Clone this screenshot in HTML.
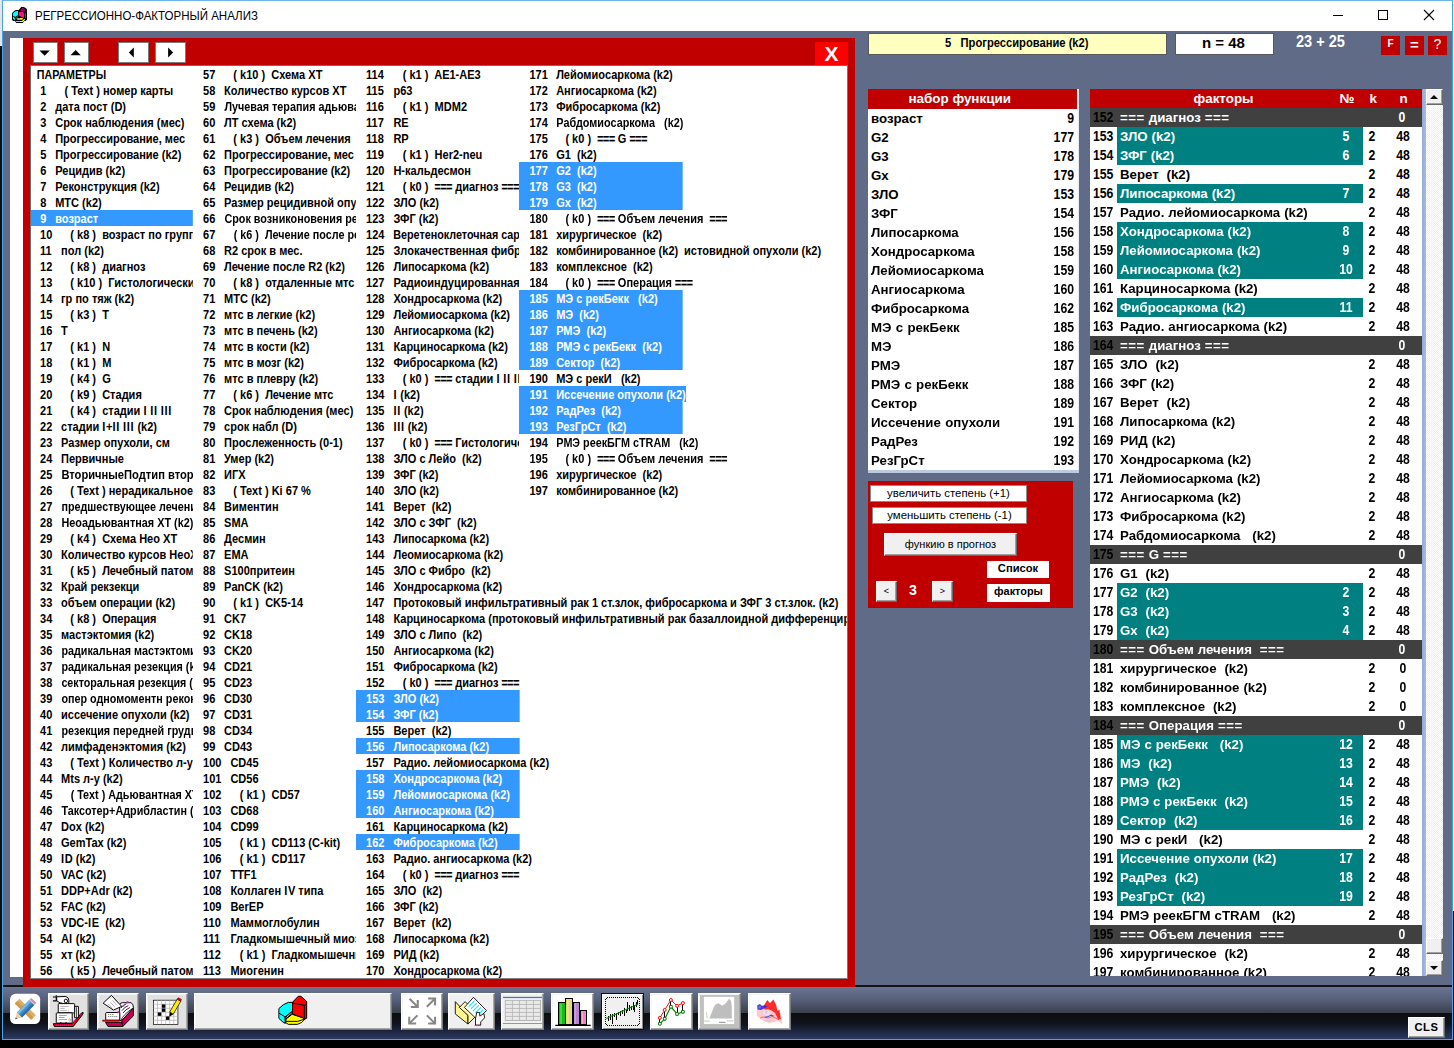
<!DOCTYPE html><html><head><meta charset='utf-8'><title>РЕГРЕССИОННО-ФАКТОРНЫЙ АНАЛИЗ</title><style>
*{box-sizing:border-box;margin:0;padding:0}
html,body{width:1454px;height:1048px;overflow:hidden;background:#000}
body{font-family:"Liberation Sans",sans-serif;position:relative;color:#000}
.a{position:absolute}
#win{position:absolute;left:0;top:0;width:1454px;height:1048px;overflow:hidden;background:#606B88}
.lr{position:absolute;height:16px;line-height:16px;font-weight:bold;font-size:13px;white-space:pre;transform-origin:0 0;transform:scaleX(0.848);overflow:hidden;background:#fff}
.lr span{position:absolute;top:1px}
.lr.s{background:#3399FF;color:#fff}
.nb{font-weight:bold;white-space:pre;display:inline-block;transform-origin:0 50%}
.btn3d{background:#F0F0F0;border:1px solid;border-color:#fff #696969 #696969 #fff;box-shadow:inset -1px -1px 0 #A0A0A0}
.tb{position:absolute;top:993px;height:37px;background:#E1E1E1;border:1px solid;border-color:#fff #7a7a7a #7a7a7a #fff;box-shadow:inset -1px -1px 0 #a8a8a8, inset 1px 1px 0 #f4f4f4}
.fr{position:absolute;left:0;width:332px;height:19px;line-height:19px;white-space:pre}
.fr span{position:absolute;top:0}
.num{font-weight:bold;font-size:14.4px;transform:scaleX(0.85);white-space:pre}
.nm{font-weight:bold;font-size:13.25px;transform:translateY(-0.45px);word-spacing:0.25px}
.eq{letter-spacing:0.55px}
.eq2{letter-spacing:-0.35px;font-style:normal;-webkit-text-stroke:0.25px currentColor;font-size:12.4px}
.ci{letter-spacing:0.8px;font-style:normal}
</style></head><body><div id='win'>
<div class='a' style='left:0;top:0;width:3px;height:46px;background:#E4E4E4'></div>
<div class='a' style='left:0;top:46px;width:3px;height:1002px;background:#0c0e14'></div>
<div class='a' style='left:1453px;top:0;width:1px;height:911px;background:#E6EEF8'></div><div class='a' style='left:1453px;top:911px;width:1px;height:137px;background:#000'></div>
<div class='a' style='left:2px;top:0;width:1451px;height:1040px;border:1px solid #4AA3E3;border-top-color:#6BB5EA'></div>
<div class='a' style='left:3px;top:1px;width:1449px;height:30px;background:#fff'></div>
<div class='a' style='left:35px;top:1px;height:30px;line-height:31px;font-size:12.3px;white-space:pre;transform-origin:0 50%;transform:scaleX(0.936)'>РЕГРЕССИОННО-ФАКТОРНЫЙ АНАЛИЗ</div>
<svg class='a' style='left:8px;top:4px' width='24' height='24' viewBox='0 0 1048 1048'>
<polygon points='175,400 265,310 350,265 470,265 575,130 690,130 790,185 830,235 830,690 770,740 700,740 650,825 355,825 310,740 225,740 175,690' fill='#000'/>
<polygon points='215,420 270,350 360,310 440,310 440,480 330,560 215,540' fill='#00FFFF'/>
<polygon points='215,570 250,570 310,640 310,700 260,690 215,620' fill='#00FFFF'/>
<polygon points='530,270 620,180 690,180 745,240 745,340 700,330 530,300' fill='#90005A'/>
<polygon points='480,350 640,350 700,420 700,600 660,600 480,500' fill='#FF1088'/>
<rect x='740' y='390' width='50' height='220' fill='#F00030'/>
<path d='M425 545 Q340 610 420 665' stroke='#9a9a9a' stroke-width='40' fill='none'/>
<rect x='410' y='625' width='110' height='65' fill='#E0E0F0'/>
<rect x='350' y='745' width='170' height='40' fill='#D8D8D8'/>
<polygon points='520,610 660,610 620,690 520,690' fill='#FFFF00'/>
<polygon points='520,745 610,745 700,650 750,660 740,690 650,785 520,785' fill='#FFFF00'/>
</svg>
<div class='a' style='left:1333px;top:15px;width:10px;height:1px;background:#000'></div>
<div class='a' style='left:1378px;top:10px;width:10px;height:10px;border:1px solid #000'></div>
<svg class='a' style='left:1423px;top:9px' width='12' height='12' viewBox='0 0 12 12'><path d='M1 1 L11 11 M11 1 L1 11' stroke='#000' stroke-width='1.1' fill='none'/></svg>
<div class='a' style='left:10px;top:38px;width:13px;height:939px;background:#fff'></div>
<div class='a' style='left:23px;top:38px;width:832px;height:949px;background:#C00000'></div>
<div class='a' style='left:3px;top:985px;width:1449px;height:2px;background:#151515'></div>
<div class='a' style='left:23px;top:985px;width:832px;height:2px;background:#C00000'></div>
<div class='a' style='left:33px;top:42px;width:25px;height:21px;background:#fff;border:1px solid #7a7a7a'></div>
<svg class='a' style='left:0;top:0' width='200' height='70'><polygon points='39.5,50.5 49.8,50.5 44.65,55.7' fill='#000'/></svg>
<div class='a' style='left:64px;top:42px;width:25px;height:21px;background:#fff;border:1px solid #7a7a7a'></div>
<svg class='a' style='left:0;top:0' width='200' height='70'><polygon points='70.5,55.3 80.8,55.3 75.65,50.1' fill='#000'/></svg>
<div class='a' style='left:118px;top:42px;width:31px;height:21px;background:#fff;border:1px solid #7a7a7a'></div>
<svg class='a' style='left:0;top:0' width='200' height='70'><polygon points='133.8,47.5 133.8,57.5 128.9,52.5' fill='#000'/></svg>
<div class='a' style='left:155px;top:42px;width:31px;height:21px;background:#fff;border:1px solid #7a7a7a'></div>
<svg class='a' style='left:0;top:0' width='200' height='70'><polygon points='168.1,47.5 168.1,57.5 173.1,52.5' fill='#000'/></svg>
<div class='a' style='left:815px;top:42px;width:33px;height:23px;background:#FF0000;color:#fff;font-weight:bold;font-size:21px;line-height:23px;text-align:center'>X</div>
<div class='a' style='left:30px;top:65px;width:818px;height:914px;background:#fff;border:1px solid #6e6e6e;border-right-color:#8a7070;border-bottom-color:#8a8080;overflow:hidden'>
<div class='lr' style='left:-1px;top:0px;width:192.2px'><span style='left:8.3px;transform:scaleX(0.967);transform-origin:0 0'>ПАРАМЕТРЫ</span></div>
<div class='lr' style='left:-1px;top:16px;width:192.2px'><span style='left:12.0px'>1</span><span style='left:40.7px'>( Text ) номер карты</span></div>
<div class='lr' style='left:-1px;top:32px;width:192.2px'><span style='left:12.0px'>2</span><span style='left:29.7px'>дата пост (D)</span></div>
<div class='lr' style='left:-1px;top:48px;width:192.2px'><span style='left:12.0px'>3</span><span style='left:29.7px'>Срок наблюдения (мес)</span></div>
<div class='lr' style='left:-1px;top:64px;width:192.2px'><span style='left:12.0px'>4</span><span style='left:29.7px'>Прогрессирование, мес</span></div>
<div class='lr' style='left:-1px;top:80px;width:192.2px'><span style='left:12.0px'>5</span><span style='left:29.7px'>Прогрессирование (k2)</span></div>
<div class='lr' style='left:-1px;top:96px;width:192.2px'><span style='left:12.0px'>6</span><span style='left:29.7px'>Рецидив (k2)</span></div>
<div class='lr' style='left:-1px;top:112px;width:192.2px'><span style='left:12.0px'>7</span><span style='left:29.7px'>Реконструкция (k2)</span></div>
<div class='lr' style='left:-1px;top:128px;width:192.2px'><span style='left:12.0px'>8</span><span style='left:29.7px'>МТС (k2)</span></div>
<div class='lr s' style='left:-1px;top:144px;width:192.2px'><span style='left:12.0px'>9</span><span style='left:29.7px'>возраст</span></div>
<div class='lr' style='left:-1px;top:160px;width:192.2px'><span style='left:11.8px'>10</span><span style='left:47.5px'>( k8 )  возраст по группам</span></div>
<div class='lr' style='left:-1px;top:176px;width:192.2px'><span style='left:11.8px'>11</span><span style='left:36.6px'>пол (k2)</span></div>
<div class='lr' style='left:-1px;top:192px;width:192.2px'><span style='left:11.8px'>12</span><span style='left:47.5px'>( k8 )  диагноз</span></div>
<div class='lr' style='left:-1px;top:208px;width:192.2px'><span style='left:11.8px'>13</span><span style='left:47.5px'>( k10 )  Гистологический тип</span></div>
<div class='lr' style='left:-1px;top:224px;width:192.2px'><span style='left:11.8px'>14</span><span style='left:36.6px'>гр по тяж (k2)</span></div>
<div class='lr' style='left:-1px;top:240px;width:192.2px'><span style='left:11.8px'>15</span><span style='left:47.5px'>( k3 )  T</span></div>
<div class='lr' style='left:-1px;top:256px;width:192.2px'><span style='left:11.8px'>16</span><span style='left:36.6px'>T</span></div>
<div class='lr' style='left:-1px;top:272px;width:192.2px'><span style='left:11.8px'>17</span><span style='left:47.5px'>( k1 )  N</span></div>
<div class='lr' style='left:-1px;top:288px;width:192.2px'><span style='left:11.8px'>18</span><span style='left:47.5px'>( k1 )  M</span></div>
<div class='lr' style='left:-1px;top:304px;width:192.2px'><span style='left:11.8px'>19</span><span style='left:47.5px'>( k4 )  G</span></div>
<div class='lr' style='left:-1px;top:320px;width:192.2px'><span style='left:11.8px'>20</span><span style='left:47.5px'>( k9 )  Стадия</span></div>
<div class='lr' style='left:-1px;top:336px;width:192.2px'><span style='left:11.8px'>21</span><span style='left:47.5px'>( k4 )  стадии <i class='ci'>I</i> <i class='ci'>I</i><i class='ci'>I</i> <i class='ci'>I</i><i class='ci'>I</i><i class='ci'>I</i></span></div>
<div class='lr' style='left:-1px;top:352px;width:192.2px'><span style='left:11.8px'>22</span><span style='left:36.6px'>стадии <i class='ci'>I</i>+<i class='ci'>I</i><i class='ci'>I</i> <i class='ci'>I</i><i class='ci'>I</i><i class='ci'>I</i> (k2)</span></div>
<div class='lr' style='left:-1px;top:368px;width:192.2px'><span style='left:11.8px'>23</span><span style='left:36.6px'>Размер опухоли, см</span></div>
<div class='lr' style='left:-1px;top:384px;width:192.2px'><span style='left:11.8px'>24</span><span style='left:36.6px'>Первичные</span></div>
<div class='lr' style='left:-1px;top:400px;width:192.2px'><span style='left:11.8px'>25</span><span style='left:36.6px;transform:scaleX(1.012);transform-origin:0 0'>ВторичныеПодтип вторичных</span></div>
<div class='lr' style='left:-1px;top:416px;width:192.2px'><span style='left:11.8px'>26</span><span style='left:47.5px'>( Text ) нерадикальное лечение</span></div>
<div class='lr' style='left:-1px;top:432px;width:192.2px'><span style='left:11.8px'>27</span><span style='left:36.6px;transform:scaleX(0.978);transform-origin:0 0'>предшествующее лечение (k2)</span></div>
<div class='lr' style='left:-1px;top:448px;width:192.2px'><span style='left:11.8px'>28</span><span style='left:36.6px;transform:scaleX(0.985);transform-origin:0 0'>Неоадьювантная ХТ (k2)</span></div>
<div class='lr' style='left:-1px;top:464px;width:192.2px'><span style='left:11.8px'>29</span><span style='left:47.5px'>( k4 )  Схема Нео ХТ</span></div>
<div class='lr' style='left:-1px;top:480px;width:192.2px'><span style='left:11.8px'>30</span><span style='left:36.6px'>Количество курсов НеоХТ</span></div>
<div class='lr' style='left:-1px;top:496px;width:192.2px'><span style='left:11.8px'>31</span><span style='left:47.5px'>( k5 )  Лечебный патоморфоз</span></div>
<div class='lr' style='left:-1px;top:512px;width:192.2px'><span style='left:11.8px'>32</span><span style='left:36.6px'>Край рекзекци</span></div>
<div class='lr' style='left:-1px;top:528px;width:192.2px'><span style='left:11.8px'>33</span><span style='left:36.6px'>объем операции (k2)</span></div>
<div class='lr' style='left:-1px;top:544px;width:192.2px'><span style='left:11.8px'>34</span><span style='left:47.5px'>( k8 )  Операция</span></div>
<div class='lr' style='left:-1px;top:560px;width:192.2px'><span style='left:11.8px'>35</span><span style='left:36.6px'>мастэктомия (k2)</span></div>
<div class='lr' style='left:-1px;top:576px;width:192.2px'><span style='left:11.8px'>36</span><span style='left:36.6px;transform:scaleX(0.978);transform-origin:0 0'>радикальная мастэктомия (k2)</span></div>
<div class='lr' style='left:-1px;top:592px;width:192.2px'><span style='left:11.8px'>37</span><span style='left:36.6px;transform:scaleX(0.978);transform-origin:0 0'>радикальная резекция (k2)</span></div>
<div class='lr' style='left:-1px;top:608px;width:192.2px'><span style='left:11.8px'>38</span><span style='left:36.6px;transform:scaleX(0.972);transform-origin:0 0'>секторальная резекция (k2)</span></div>
<div class='lr' style='left:-1px;top:624px;width:192.2px'><span style='left:11.8px'>39</span><span style='left:36.6px;transform:scaleX(0.978);transform-origin:0 0'>опер одномоментн реконстр (k2)</span></div>
<div class='lr' style='left:-1px;top:640px;width:192.2px'><span style='left:11.8px'>40</span><span style='left:36.6px'>иссечение опухоли (k2)</span></div>
<div class='lr' style='left:-1px;top:656px;width:192.2px'><span style='left:11.8px'>41</span><span style='left:36.6px;transform:scaleX(0.978);transform-origin:0 0'>резекция передней грудной стенки (k2)</span></div>
<div class='lr' style='left:-1px;top:672px;width:192.2px'><span style='left:11.8px'>42</span><span style='left:36.6px'>лимфаденэктомия (k2)</span></div>
<div class='lr' style='left:-1px;top:688px;width:192.2px'><span style='left:11.8px'>43</span><span style='left:47.5px'>( Text ) Количество л-у</span></div>
<div class='lr' style='left:-1px;top:704px;width:192.2px'><span style='left:11.8px'>44</span><span style='left:36.6px'>Mts л-у (k2)</span></div>
<div class='lr' style='left:-1px;top:720px;width:192.2px'><span style='left:11.8px'>45</span><span style='left:47.5px;transform:scaleX(0.978);transform-origin:0 0'>( Text ) Адьювантная ХТ</span></div>
<div class='lr' style='left:-1px;top:736px;width:192.2px'><span style='left:11.8px'>46</span><span style='left:36.6px;transform:scaleX(0.978);transform-origin:0 0'>Таксотер+Адрибластин (k2)</span></div>
<div class='lr' style='left:-1px;top:752px;width:192.2px'><span style='left:11.8px'>47</span><span style='left:36.6px'>Dox (k2)</span></div>
<div class='lr' style='left:-1px;top:768px;width:192.2px'><span style='left:11.8px'>48</span><span style='left:36.6px'>GemTax (k2)</span></div>
<div class='lr' style='left:-1px;top:784px;width:192.2px'><span style='left:11.8px'>49</span><span style='left:36.6px'><i class='ci'>I</i>D (k2)</span></div>
<div class='lr' style='left:-1px;top:800px;width:192.2px'><span style='left:11.8px'>50</span><span style='left:36.6px'>VAC (k2)</span></div>
<div class='lr' style='left:-1px;top:816px;width:192.2px'><span style='left:11.8px'>51</span><span style='left:36.6px'>DDP+Adr (k2)</span></div>
<div class='lr' style='left:-1px;top:832px;width:192.2px'><span style='left:11.8px'>52</span><span style='left:36.6px'>FAC (k2)</span></div>
<div class='lr' style='left:-1px;top:848px;width:192.2px'><span style='left:11.8px'>53</span><span style='left:36.6px'>VDC-<i class='ci'>I</i>E  (k2)</span></div>
<div class='lr' style='left:-1px;top:864px;width:192.2px'><span style='left:11.8px'>54</span><span style='left:36.6px'>A<i class='ci'>I</i> (k2)</span></div>
<div class='lr' style='left:-1px;top:880px;width:192.2px'><span style='left:11.8px'>55</span><span style='left:36.6px'>хт (k2)</span></div>
<div class='lr' style='left:-1px;top:896px;width:192.2px'><span style='left:11.8px'>56</span><span style='left:47.5px'>( k5 )  Лечебный патоморфоз</span></div>
<div class='lr' style='left:162px;top:0px;width:192.2px'><span style='left:11.8px'>57</span><span style='left:47.5px'>( k10 )  Схема ХТ</span></div>
<div class='lr' style='left:162px;top:16px;width:192.2px'><span style='left:11.8px'>58</span><span style='left:36.6px'>Количество курсов ХТ</span></div>
<div class='lr' style='left:162px;top:32px;width:192.2px'><span style='left:11.8px'>59</span><span style='left:36.6px;transform:scaleX(0.98);transform-origin:0 0'>Лучевая терапия адьювантная (k2)</span></div>
<div class='lr' style='left:162px;top:48px;width:192.2px'><span style='left:11.8px'>60</span><span style='left:36.6px'>ЛТ схема (k2)</span></div>
<div class='lr' style='left:162px;top:64px;width:192.2px'><span style='left:11.8px'>61</span><span style='left:47.5px'>( k3 )  Объем лечения</span></div>
<div class='lr' style='left:162px;top:80px;width:192.2px'><span style='left:11.8px'>62</span><span style='left:36.6px'>Прогрессирование, мес</span></div>
<div class='lr' style='left:162px;top:96px;width:192.2px'><span style='left:11.8px'>63</span><span style='left:36.6px'>Прогрессирование (k2)</span></div>
<div class='lr' style='left:162px;top:112px;width:192.2px'><span style='left:11.8px'>64</span><span style='left:36.6px'>Рецидив (k2)</span></div>
<div class='lr' style='left:162px;top:128px;width:192.2px'><span style='left:11.8px'>65</span><span style='left:36.6px'>Размер рецидивной опухоли</span></div>
<div class='lr' style='left:162px;top:144px;width:192.2px'><span style='left:11.8px'>66</span><span style='left:36.6px;transform:scaleX(0.98);transform-origin:0 0'>Срок возниконовения рецидива</span></div>
<div class='lr' style='left:162px;top:160px;width:192.2px'><span style='left:11.8px'>67</span><span style='left:47.5px;transform:scaleX(0.98);transform-origin:0 0'>( k6 )  Лечение после рецидива</span></div>
<div class='lr' style='left:162px;top:176px;width:192.2px'><span style='left:11.8px'>68</span><span style='left:36.6px'>R2 срок в мес.</span></div>
<div class='lr' style='left:162px;top:192px;width:192.2px'><span style='left:11.8px'>69</span><span style='left:36.6px'>Лечение после R2 (k2)</span></div>
<div class='lr' style='left:162px;top:208px;width:192.2px'><span style='left:11.8px'>70</span><span style='left:47.5px'>( k8 )  отдаленные мтс</span></div>
<div class='lr' style='left:162px;top:224px;width:192.2px'><span style='left:11.8px'>71</span><span style='left:36.6px'>МТС (k2)</span></div>
<div class='lr' style='left:162px;top:240px;width:192.2px'><span style='left:11.8px'>72</span><span style='left:36.6px'>мтс в легкие (k2)</span></div>
<div class='lr' style='left:162px;top:256px;width:192.2px'><span style='left:11.8px'>73</span><span style='left:36.6px'>мтс в печень (k2)</span></div>
<div class='lr' style='left:162px;top:272px;width:192.2px'><span style='left:11.8px'>74</span><span style='left:36.6px'>мтс в кости (k2)</span></div>
<div class='lr' style='left:162px;top:288px;width:192.2px'><span style='left:11.8px'>75</span><span style='left:36.6px'>мтс в мозг (k2)</span></div>
<div class='lr' style='left:162px;top:304px;width:192.2px'><span style='left:11.8px'>76</span><span style='left:36.6px'>мтс в плевру (k2)</span></div>
<div class='lr' style='left:162px;top:320px;width:192.2px'><span style='left:11.8px'>77</span><span style='left:47.5px'>( k6 )  Лечение мтс</span></div>
<div class='lr' style='left:162px;top:336px;width:192.2px'><span style='left:11.8px'>78</span><span style='left:36.6px'>Срок наблюдения (мес)</span></div>
<div class='lr' style='left:162px;top:352px;width:192.2px'><span style='left:11.8px'>79</span><span style='left:36.6px'>срок набл (D)</span></div>
<div class='lr' style='left:162px;top:368px;width:192.2px'><span style='left:11.8px'>80</span><span style='left:36.6px'>Прослеженность (0-1)</span></div>
<div class='lr' style='left:162px;top:384px;width:192.2px'><span style='left:11.8px'>81</span><span style='left:36.6px'>Умер (k2)</span></div>
<div class='lr' style='left:162px;top:400px;width:192.2px'><span style='left:11.8px'>82</span><span style='left:36.6px'>ИГХ</span></div>
<div class='lr' style='left:162px;top:416px;width:192.2px'><span style='left:11.8px'>83</span><span style='left:47.5px'>( Text ) Ki 67 %</span></div>
<div class='lr' style='left:162px;top:432px;width:192.2px'><span style='left:11.8px'>84</span><span style='left:36.6px'>Виментин</span></div>
<div class='lr' style='left:162px;top:448px;width:192.2px'><span style='left:11.8px'>85</span><span style='left:36.6px'>SMA</span></div>
<div class='lr' style='left:162px;top:464px;width:192.2px'><span style='left:11.8px'>86</span><span style='left:36.6px'>Десмин</span></div>
<div class='lr' style='left:162px;top:480px;width:192.2px'><span style='left:11.8px'>87</span><span style='left:36.6px'>EMA</span></div>
<div class='lr' style='left:162px;top:496px;width:192.2px'><span style='left:11.8px'>88</span><span style='left:36.6px'>S100притеин</span></div>
<div class='lr' style='left:162px;top:512px;width:192.2px'><span style='left:11.8px'>89</span><span style='left:36.6px'>PanCK (k2)</span></div>
<div class='lr' style='left:162px;top:528px;width:192.2px'><span style='left:11.8px'>90</span><span style='left:47.5px'>( k1 )  CK5-14</span></div>
<div class='lr' style='left:162px;top:544px;width:192.2px'><span style='left:11.8px'>91</span><span style='left:36.6px'>CK7</span></div>
<div class='lr' style='left:162px;top:560px;width:192.2px'><span style='left:11.8px'>92</span><span style='left:36.6px'>CK18</span></div>
<div class='lr' style='left:162px;top:576px;width:192.2px'><span style='left:11.8px'>93</span><span style='left:36.6px'>CK20</span></div>
<div class='lr' style='left:162px;top:592px;width:192.2px'><span style='left:11.8px'>94</span><span style='left:36.6px'>CD21</span></div>
<div class='lr' style='left:162px;top:608px;width:192.2px'><span style='left:11.8px'>95</span><span style='left:36.6px'>CD23</span></div>
<div class='lr' style='left:162px;top:624px;width:192.2px'><span style='left:11.8px'>96</span><span style='left:36.6px'>CD30</span></div>
<div class='lr' style='left:162px;top:640px;width:192.2px'><span style='left:11.8px'>97</span><span style='left:36.6px'>CD31</span></div>
<div class='lr' style='left:162px;top:656px;width:192.2px'><span style='left:11.8px'>98</span><span style='left:36.6px'>CD34</span></div>
<div class='lr' style='left:162px;top:672px;width:192.2px'><span style='left:11.8px'>99</span><span style='left:36.6px'>CD43</span></div>
<div class='lr' style='left:162px;top:688px;width:192.2px'><span style='left:11.8px'>100</span><span style='left:44.1px'>CD45</span></div>
<div class='lr' style='left:162px;top:704px;width:192.2px'><span style='left:11.8px'>101</span><span style='left:44.1px'>CD56</span></div>
<div class='lr' style='left:162px;top:720px;width:192.2px'><span style='left:11.8px'>102</span><span style='left:55.1px'>( k1 )  CD57</span></div>
<div class='lr' style='left:162px;top:736px;width:192.2px'><span style='left:11.8px'>103</span><span style='left:44.1px'>CD68</span></div>
<div class='lr' style='left:162px;top:752px;width:192.2px'><span style='left:11.8px'>104</span><span style='left:44.1px'>CD99</span></div>
<div class='lr' style='left:162px;top:768px;width:192.2px'><span style='left:11.8px'>105</span><span style='left:55.1px'>( k1 )  CD113 (C-kit)</span></div>
<div class='lr' style='left:162px;top:784px;width:192.2px'><span style='left:11.8px'>106</span><span style='left:55.1px'>( k1 )  CD117</span></div>
<div class='lr' style='left:162px;top:800px;width:192.2px'><span style='left:11.8px'>107</span><span style='left:44.1px'>TTF1</span></div>
<div class='lr' style='left:162px;top:816px;width:192.2px'><span style='left:11.8px'>108</span><span style='left:44.1px'>Коллаген <i class='ci'>I</i>V типа</span></div>
<div class='lr' style='left:162px;top:832px;width:192.2px'><span style='left:11.8px'>109</span><span style='left:44.1px'>BerEP</span></div>
<div class='lr' style='left:162px;top:848px;width:192.2px'><span style='left:11.8px'>110</span><span style='left:44.1px'>Маммоглобулин</span></div>
<div class='lr' style='left:162px;top:864px;width:192.2px'><span style='left:11.8px'>111</span><span style='left:44.1px'>Гладкомышечный миозин</span></div>
<div class='lr' style='left:162px;top:880px;width:192.2px'><span style='left:11.8px'>112</span><span style='left:55.1px'>( k1 )  Гладкомышечный актин</span></div>
<div class='lr' style='left:162px;top:896px;width:192.2px'><span style='left:11.8px'>113</span><span style='left:44.1px'>Миогенин</span></div>
<div class='lr' style='left:325px;top:0px;width:580.2px;background:transparent'><span style='left:11.8px'>114</span><span style='left:55.1px'>( k1 )  AE1-AE3</span></div>
<div class='lr' style='left:325px;top:16px;width:580.2px;background:transparent'><span style='left:11.8px'>115</span><span style='left:44.1px'>p63</span></div>
<div class='lr' style='left:325px;top:32px;width:580.2px;background:transparent'><span style='left:11.8px'>116</span><span style='left:55.1px'>( k1 )  MDM2</span></div>
<div class='lr' style='left:325px;top:48px;width:580.2px;background:transparent'><span style='left:11.8px'>117</span><span style='left:44.1px'>RE</span></div>
<div class='lr' style='left:325px;top:64px;width:580.2px;background:transparent'><span style='left:11.8px'>118</span><span style='left:44.1px'>RP</span></div>
<div class='lr' style='left:325px;top:80px;width:580.2px;background:transparent'><span style='left:11.8px'>119</span><span style='left:55.1px'>( k1 )  Her2-neu</span></div>
<div class='lr' style='left:325px;top:96px;width:580.2px;background:transparent'><span style='left:11.8px'>120</span><span style='left:44.1px'>Н-кальдесмон</span></div>
<div class='lr' style='left:325px;top:112px;width:580.2px;background:transparent'><span style='left:11.8px'>121</span><span style='left:55.1px'>( k0 )  <i class='eq2'>===</i> диагноз <i class='eq2'>===</i></span></div>
<div class='lr' style='left:325px;top:128px;width:580.2px;background:transparent'><span style='left:11.8px'>122</span><span style='left:44.1px'>ЗЛО (k2)</span></div>
<div class='lr' style='left:325px;top:144px;width:580.2px;background:transparent'><span style='left:11.8px'>123</span><span style='left:44.1px'>ЗФГ (k2)</span></div>
<div class='lr' style='left:325px;top:160px;width:580.2px;background:transparent'><span style='left:11.8px'>124</span><span style='left:44.1px;transform:scaleX(0.975);transform-origin:0 0'>Веретеноклеточная саркома (k2)</span></div>
<div class='lr' style='left:325px;top:176px;width:580.2px;background:transparent'><span style='left:11.8px'>125</span><span style='left:44.1px'>Злокачественная фиброзная гистиоцитома</span></div>
<div class='lr' style='left:325px;top:192px;width:580.2px;background:transparent'><span style='left:11.8px'>126</span><span style='left:44.1px'>Липосаркома (k2)</span></div>
<div class='lr' style='left:325px;top:208px;width:580.2px;background:transparent'><span style='left:11.8px'>127</span><span style='left:44.1px'>Радиоиндуцированная саркома</span></div>
<div class='lr' style='left:325px;top:224px;width:580.2px;background:transparent'><span style='left:11.8px'>128</span><span style='left:44.1px'>Хондросаркома (k2)</span></div>
<div class='lr' style='left:325px;top:240px;width:580.2px;background:transparent'><span style='left:11.8px'>129</span><span style='left:44.1px'>Лейомиосаркома (k2)</span></div>
<div class='lr' style='left:325px;top:256px;width:580.2px;background:transparent'><span style='left:11.8px'>130</span><span style='left:44.1px'>Ангиосаркома (k2)</span></div>
<div class='lr' style='left:325px;top:272px;width:580.2px;background:transparent'><span style='left:11.8px'>131</span><span style='left:44.1px'>Карциносаркома (k2)</span></div>
<div class='lr' style='left:325px;top:288px;width:580.2px;background:transparent'><span style='left:11.8px'>132</span><span style='left:44.1px'>Фибросаркома (k2)</span></div>
<div class='lr' style='left:325px;top:304px;width:580.2px;background:transparent'><span style='left:11.8px'>133</span><span style='left:55.1px'>( k0 )  <i class='eq2'>===</i> стадии <i class='ci'>I</i> <i class='ci'>I</i><i class='ci'>I</i> <i class='ci'>I</i><i class='ci'>I</i><i class='ci'>I</i> <i class='eq2'>===</i></span></div>
<div class='lr' style='left:325px;top:320px;width:580.2px;background:transparent'><span style='left:11.8px'>134</span><span style='left:44.1px'><i class='ci'>I</i> (k2)</span></div>
<div class='lr' style='left:325px;top:336px;width:580.2px;background:transparent'><span style='left:11.8px'>135</span><span style='left:44.1px'><i class='ci'>I</i><i class='ci'>I</i> (k2)</span></div>
<div class='lr' style='left:325px;top:352px;width:580.2px;background:transparent'><span style='left:11.8px'>136</span><span style='left:44.1px'><i class='ci'>I</i><i class='ci'>I</i><i class='ci'>I</i> (k2)</span></div>
<div class='lr' style='left:325px;top:368px;width:580.2px;background:transparent'><span style='left:11.8px'>137</span><span style='left:55.1px'>( k0 )  <i class='eq2'>===</i> Гистологический тип <i class='eq2'>===</i></span></div>
<div class='lr' style='left:325px;top:384px;width:580.2px;background:transparent'><span style='left:11.8px'>138</span><span style='left:44.1px'>ЗЛО с Лейо  (k2)</span></div>
<div class='lr' style='left:325px;top:400px;width:580.2px;background:transparent'><span style='left:11.8px'>139</span><span style='left:44.1px'>ЗФГ (k2)</span></div>
<div class='lr' style='left:325px;top:416px;width:580.2px;background:transparent'><span style='left:11.8px'>140</span><span style='left:44.1px'>ЗЛО (k2)</span></div>
<div class='lr' style='left:325px;top:432px;width:580.2px;background:transparent'><span style='left:11.8px'>141</span><span style='left:44.1px'>Верет  (k2)</span></div>
<div class='lr' style='left:325px;top:448px;width:580.2px;background:transparent'><span style='left:11.8px'>142</span><span style='left:44.1px'>ЗЛО с ЗФГ  (k2)</span></div>
<div class='lr' style='left:325px;top:464px;width:580.2px;background:transparent'><span style='left:11.8px'>143</span><span style='left:44.1px'>Липосаркома (k2)</span></div>
<div class='lr' style='left:325px;top:480px;width:580.2px;background:transparent'><span style='left:11.8px'>144</span><span style='left:44.1px'>Леомиосаркома (k2)</span></div>
<div class='lr' style='left:325px;top:496px;width:580.2px;background:transparent'><span style='left:11.8px'>145</span><span style='left:44.1px'>ЗЛО с Фибро  (k2)</span></div>
<div class='lr' style='left:325px;top:512px;width:580.2px;background:transparent'><span style='left:11.8px'>146</span><span style='left:44.1px'>Хондросаркома (k2)</span></div>
<div class='lr' style='left:325px;top:528px;width:580.2px;background:transparent'><span style='left:11.8px'>147</span><span style='left:44.1px'>Протоковый инфильтративный рак 1 ст.злок, фибросаркома и ЗФГ 3 ст.злок. (k2)</span></div>
<div class='lr' style='left:325px;top:544px;width:580.2px;background:transparent'><span style='left:11.8px'>148</span><span style='left:44.1px'>Карциносаркома (протоковый инфильтративный рак базаллоидной дифференцировки) (k2)</span></div>
<div class='lr' style='left:325px;top:560px;width:580.2px;background:transparent'><span style='left:11.8px'>149</span><span style='left:44.1px'>ЗЛО с Липо  (k2)</span></div>
<div class='lr' style='left:325px;top:576px;width:580.2px;background:transparent'><span style='left:11.8px'>150</span><span style='left:44.1px'>Ангиосаркома (k2)</span></div>
<div class='lr' style='left:325px;top:592px;width:580.2px;background:transparent'><span style='left:11.8px'>151</span><span style='left:44.1px'>Фибросаркома (k2)</span></div>
<div class='lr' style='left:325px;top:608px;width:580.2px;background:transparent'><span style='left:11.8px'>152</span><span style='left:55.1px'>( k0 )  <i class='eq2'>===</i> диагноз <i class='eq2'>===</i></span></div>
<div class='lr s' style='left:325px;top:624px;width:193.4px'><span style='left:11.8px'>153</span><span style='left:44.1px'>ЗЛО (k2)</span></div>
<div class='lr s' style='left:325px;top:640px;width:193.4px'><span style='left:11.8px'>154</span><span style='left:44.1px'>ЗФГ (k2)</span></div>
<div class='lr' style='left:325px;top:656px;width:580.2px;background:transparent'><span style='left:11.8px'>155</span><span style='left:44.1px'>Верет  (k2)</span></div>
<div class='lr s' style='left:325px;top:672px;width:193.4px'><span style='left:11.8px'>156</span><span style='left:44.1px'>Липосаркома (k2)</span></div>
<div class='lr' style='left:325px;top:688px;width:580.2px;background:transparent'><span style='left:11.8px'>157</span><span style='left:44.1px'>Радио. лейомиосаркома (k2)</span></div>
<div class='lr s' style='left:325px;top:704px;width:193.4px'><span style='left:11.8px'>158</span><span style='left:44.1px'>Хондросаркома (k2)</span></div>
<div class='lr s' style='left:325px;top:720px;width:193.4px'><span style='left:11.8px'>159</span><span style='left:44.1px'>Лейомиосаркома (k2)</span></div>
<div class='lr s' style='left:325px;top:736px;width:193.4px'><span style='left:11.8px'>160</span><span style='left:44.1px'>Ангиосаркома (k2)</span></div>
<div class='lr' style='left:325px;top:752px;width:580.2px;background:transparent'><span style='left:11.8px'>161</span><span style='left:44.1px'>Карциносаркома (k2)</span></div>
<div class='lr s' style='left:325px;top:768px;width:193.4px'><span style='left:11.8px'>162</span><span style='left:44.1px'>Фибросаркома (k2)</span></div>
<div class='lr' style='left:325px;top:784px;width:580.2px;background:transparent'><span style='left:11.8px'>163</span><span style='left:44.1px'>Радио. ангиосаркома (k2)</span></div>
<div class='lr' style='left:325px;top:800px;width:580.2px;background:transparent'><span style='left:11.8px'>164</span><span style='left:55.1px'>( k0 )  <i class='eq2'>===</i> диагноз <i class='eq2'>===</i></span></div>
<div class='lr' style='left:325px;top:816px;width:580.2px;background:transparent'><span style='left:11.8px'>165</span><span style='left:44.1px'>ЗЛО  (k2)</span></div>
<div class='lr' style='left:325px;top:832px;width:580.2px;background:transparent'><span style='left:11.8px'>166</span><span style='left:44.1px'>ЗФГ (k2)</span></div>
<div class='lr' style='left:325px;top:848px;width:580.2px;background:transparent'><span style='left:11.8px'>167</span><span style='left:44.1px'>Верет  (k2)</span></div>
<div class='lr' style='left:325px;top:864px;width:580.2px;background:transparent'><span style='left:11.8px'>168</span><span style='left:44.1px'>Липосаркома (k2)</span></div>
<div class='lr' style='left:325px;top:880px;width:580.2px;background:transparent'><span style='left:11.8px'>169</span><span style='left:44.1px'>РИД (k2)</span></div>
<div class='lr' style='left:325px;top:896px;width:580.2px;background:transparent'><span style='left:11.8px'>170</span><span style='left:44.1px'>Хондросаркома (k2)</span></div>
<div class='lr' style='left:652.5px;top:176px;width:200px;background:transparent'><span style='left:0'>истовидной опухоли (k2)</span></div>
<div class='lr' style='left:488px;top:0px;width:193.4px;overflow:visible'><span style='left:12.3px'>171</span><span style='left:43.8px'>Лейомиосаркома (k2)</span></div>
<div class='lr' style='left:488px;top:16px;width:193.4px;overflow:visible'><span style='left:12.3px'>172</span><span style='left:43.8px'>Ангиосаркома (k2)</span></div>
<div class='lr' style='left:488px;top:32px;width:193.4px;overflow:visible'><span style='left:12.3px'>173</span><span style='left:43.8px'>Фибросаркома (k2)</span></div>
<div class='lr' style='left:488px;top:48px;width:193.4px;overflow:visible'><span style='left:12.3px'>174</span><span style='left:43.8px;transform:scaleX(0.985);transform-origin:0 0'>Рабдомиосаркома   (k2)</span></div>
<div class='lr' style='left:488px;top:64px;width:193.4px;overflow:visible'><span style='left:12.3px'>175</span><span style='left:54.7px'>( k0 )  <i class='eq2'>===</i> G <i class='eq2'>===</i></span></div>
<div class='lr' style='left:488px;top:80px;width:193.4px;overflow:visible'><span style='left:12.3px'>176</span><span style='left:43.8px'>G1  (k2)</span></div>
<div class='lr s' style='left:488px;top:96px;width:193.4px;overflow:visible'><span style='left:12.3px'>177</span><span style='left:43.8px'>G2  (k2)</span></div>
<div class='lr s' style='left:488px;top:112px;width:193.4px;overflow:visible'><span style='left:12.3px'>178</span><span style='left:43.8px'>G3  (k2)</span></div>
<div class='lr s' style='left:488px;top:128px;width:193.4px;overflow:visible'><span style='left:12.3px'>179</span><span style='left:43.8px'>Gx  (k2)</span></div>
<div class='lr' style='left:488px;top:144px;width:193.4px;overflow:visible'><span style='left:12.3px'>180</span><span style='left:54.7px'>( k0 )  <i class='eq2'>===</i> Объем лечения  <i class='eq2'>===</i></span></div>
<div class='lr' style='left:488px;top:160px;width:193.4px;overflow:visible'><span style='left:12.3px'>181</span><span style='left:43.8px'>хирургическое  (k2)</span></div>
<div class='lr' style='left:488px;top:176px;width:193.4px;overflow:visible'><span style='left:12.3px'>182</span><span style='left:43.8px'>комбинированное (k2)</span></div>
<div class='lr' style='left:488px;top:192px;width:193.4px;overflow:visible'><span style='left:12.3px'>183</span><span style='left:43.8px'>комплексное  (k2)</span></div>
<div class='lr' style='left:488px;top:208px;width:193.4px;overflow:visible'><span style='left:12.3px'>184</span><span style='left:54.7px'>( k0 )  <i class='eq2'>===</i> Операция <i class='eq2'>===</i></span></div>
<div class='lr s' style='left:488px;top:224px;width:193.4px;overflow:visible'><span style='left:12.3px'>185</span><span style='left:43.8px'>МЭ с рекБекк   (k2)</span></div>
<div class='lr s' style='left:488px;top:240px;width:193.4px;overflow:visible'><span style='left:12.3px'>186</span><span style='left:43.8px'>МЭ  (k2)</span></div>
<div class='lr s' style='left:488px;top:256px;width:193.4px;overflow:visible'><span style='left:12.3px'>187</span><span style='left:43.8px'>РМЭ  (k2)</span></div>
<div class='lr s' style='left:488px;top:272px;width:193.4px;overflow:visible'><span style='left:12.3px'>188</span><span style='left:43.8px'>РМЭ с рекБекк  (k2)</span></div>
<div class='lr s' style='left:488px;top:288px;width:193.4px;overflow:visible'><span style='left:12.3px'>189</span><span style='left:43.8px'>Сектор  (k2)</span></div>
<div class='lr' style='left:488px;top:304px;width:193.4px;overflow:visible'><span style='left:12.3px'>190</span><span style='left:43.8px'>МЭ с рекИ   (k2)</span></div>
<div class='lr s' style='left:488px;top:320px;width:196.5px;overflow:visible'><span style='left:12.3px'>191</span><span style='left:43.8px'>Иссечение опухоли (k2)</span></div>
<div class='lr s' style='left:488px;top:336px;width:193.4px;overflow:visible'><span style='left:12.3px'>192</span><span style='left:43.8px'>РадРез  (k2)</span></div>
<div class='lr s' style='left:488px;top:352px;width:193.4px;overflow:visible'><span style='left:12.3px'>193</span><span style='left:43.8px'>РезГрСт  (k2)</span></div>
<div class='lr' style='left:488px;top:368px;width:193.4px;overflow:visible'><span style='left:12.3px'>194</span><span style='left:43.8px;transform:scaleX(0.98);transform-origin:0 0'>РМЭ реекБГМ сTRAM   (k2)</span></div>
<div class='lr' style='left:488px;top:384px;width:193.4px;overflow:visible'><span style='left:12.3px'>195</span><span style='left:54.7px'>( k0 )  <i class='eq2'>===</i> Объем лечения  <i class='eq2'>===</i></span></div>
<div class='lr' style='left:488px;top:400px;width:193.4px;overflow:visible'><span style='left:12.3px'>196</span><span style='left:43.8px'>хирургическое  (k2)</span></div>
<div class='lr' style='left:488px;top:416px;width:193.4px;overflow:visible'><span style='left:12.3px'>197</span><span style='left:43.8px'>комбинированное (k2)</span></div>
</div>
<div class='a' style='left:868px;top:33px;width:299px;height:22px;background:#FFFFC0;border:1px solid #585858'></div>
<div class='a nb' style='left:945px;top:33px;height:20px;line-height:19px;font-size:13px;transform:scaleX(0.86)'>5   Прогрессирование (k2)</div>
<div class='a' style='left:1175px;top:33px;width:99px;height:22px;background:#fff;border:1px solid #585858;text-align:center;font-weight:bold;font-size:15px;line-height:17.5px;padding-right:2px'>n = 48</div>
<div class='a nb' style='left:1296px;top:31.7px;height:20px;line-height:20px;font-size:15.8px;color:#fff;transform:scaleX(0.92)'>23 + 25</div>
<div class='a' style='left:1381px;top:36px;width:19px;height:19px;background:#C00000;color:#fff;font-weight:bold;font-size:10px;line-height:16px;text-align:center'>F</div>
<div class='a' style='left:1405px;top:36px;width:19px;height:19px;background:#C00000;color:#fff;font-weight:bold;font-size:15px;line-height:17px;text-align:center'>=</div>
<div class='a' style='left:1428px;top:36px;width:19px;height:19px;background:#C00000;color:#fff;font-weight:normal;font-size:14px;line-height:17.5px;text-align:center'>?</div>
<div class='a' style='left:868px;top:89px;width:209px;height:20px;background:#C00000;color:#fff;font-weight:bold;font-size:13.4px;line-height:19.5px'><span class='a' style='left:40.5px;top:0;white-space:pre'>набор функции</span></div>
<div class='a' style='left:1077px;top:89px;width:2px;height:384px;background:linear-gradient(90deg,#fff,#dfe6f2)'></div>
<div class='a' style='left:868px;top:109px;width:209px;height:361px;background:#fff'></div>
<div class='a' style='left:868px;top:470px;width:211px;height:3px;background:#BCCADF'></div>
<div class='a nm' style='left:871px;top:109px;height:19px;line-height:19px;white-space:pre;word-spacing:0.6px'>возраст</div>
<div class='a num' style='left:1024.4px;top:109px;width:50px;height:19px;line-height:19px;text-align:right;transform-origin:100% 50%'>9</div>
<div class='a nm' style='left:871px;top:128px;height:19px;line-height:19px;white-space:pre;word-spacing:0.6px'>G2</div>
<div class='a num' style='left:1024.4px;top:128px;width:50px;height:19px;line-height:19px;text-align:right;transform-origin:100% 50%'>177</div>
<div class='a nm' style='left:871px;top:147px;height:19px;line-height:19px;white-space:pre;word-spacing:0.6px'>G3</div>
<div class='a num' style='left:1024.4px;top:147px;width:50px;height:19px;line-height:19px;text-align:right;transform-origin:100% 50%'>178</div>
<div class='a nm' style='left:871px;top:166px;height:19px;line-height:19px;white-space:pre;word-spacing:0.6px'>Gx</div>
<div class='a num' style='left:1024.4px;top:166px;width:50px;height:19px;line-height:19px;text-align:right;transform-origin:100% 50%'>179</div>
<div class='a nm' style='left:871px;top:185px;height:19px;line-height:19px;white-space:pre;word-spacing:0.6px'>ЗЛО</div>
<div class='a num' style='left:1024.4px;top:185px;width:50px;height:19px;line-height:19px;text-align:right;transform-origin:100% 50%'>153</div>
<div class='a nm' style='left:871px;top:204px;height:19px;line-height:19px;white-space:pre;word-spacing:0.6px'>ЗФГ</div>
<div class='a num' style='left:1024.4px;top:204px;width:50px;height:19px;line-height:19px;text-align:right;transform-origin:100% 50%'>154</div>
<div class='a nm' style='left:871px;top:223px;height:19px;line-height:19px;white-space:pre;word-spacing:0.6px'>Липосаркома</div>
<div class='a num' style='left:1024.4px;top:223px;width:50px;height:19px;line-height:19px;text-align:right;transform-origin:100% 50%'>156</div>
<div class='a nm' style='left:871px;top:242px;height:19px;line-height:19px;white-space:pre;word-spacing:0.6px'>Хондросаркома</div>
<div class='a num' style='left:1024.4px;top:242px;width:50px;height:19px;line-height:19px;text-align:right;transform-origin:100% 50%'>158</div>
<div class='a nm' style='left:871px;top:261px;height:19px;line-height:19px;white-space:pre;word-spacing:0.6px'>Лейомиосаркома</div>
<div class='a num' style='left:1024.4px;top:261px;width:50px;height:19px;line-height:19px;text-align:right;transform-origin:100% 50%'>159</div>
<div class='a nm' style='left:871px;top:280px;height:19px;line-height:19px;white-space:pre;word-spacing:0.6px'>Ангиосаркома</div>
<div class='a num' style='left:1024.4px;top:280px;width:50px;height:19px;line-height:19px;text-align:right;transform-origin:100% 50%'>160</div>
<div class='a nm' style='left:871px;top:299px;height:19px;line-height:19px;white-space:pre;word-spacing:0.6px'>Фибросаркома</div>
<div class='a num' style='left:1024.4px;top:299px;width:50px;height:19px;line-height:19px;text-align:right;transform-origin:100% 50%'>162</div>
<div class='a nm' style='left:871px;top:318px;height:19px;line-height:19px;white-space:pre;word-spacing:0.6px'>МЭ с рекБекк</div>
<div class='a num' style='left:1024.4px;top:318px;width:50px;height:19px;line-height:19px;text-align:right;transform-origin:100% 50%'>185</div>
<div class='a nm' style='left:871px;top:337px;height:19px;line-height:19px;white-space:pre;word-spacing:0.6px'>МЭ</div>
<div class='a num' style='left:1024.4px;top:337px;width:50px;height:19px;line-height:19px;text-align:right;transform-origin:100% 50%'>186</div>
<div class='a nm' style='left:871px;top:356px;height:19px;line-height:19px;white-space:pre;word-spacing:0.6px'>РМЭ</div>
<div class='a num' style='left:1024.4px;top:356px;width:50px;height:19px;line-height:19px;text-align:right;transform-origin:100% 50%'>187</div>
<div class='a nm' style='left:871px;top:375px;height:19px;line-height:19px;white-space:pre;word-spacing:0.6px'>РМЭ с рекБекк</div>
<div class='a num' style='left:1024.4px;top:375px;width:50px;height:19px;line-height:19px;text-align:right;transform-origin:100% 50%'>188</div>
<div class='a nm' style='left:871px;top:394px;height:19px;line-height:19px;white-space:pre;word-spacing:0.6px'>Сектор</div>
<div class='a num' style='left:1024.4px;top:394px;width:50px;height:19px;line-height:19px;text-align:right;transform-origin:100% 50%'>189</div>
<div class='a nm' style='left:871px;top:413px;height:19px;line-height:19px;white-space:pre;word-spacing:0.6px'>Иссечение опухоли</div>
<div class='a num' style='left:1024.4px;top:413px;width:50px;height:19px;line-height:19px;text-align:right;transform-origin:100% 50%'>191</div>
<div class='a nm' style='left:871px;top:432px;height:19px;line-height:19px;white-space:pre;word-spacing:0.6px'>РадРез</div>
<div class='a num' style='left:1024.4px;top:432px;width:50px;height:19px;line-height:19px;text-align:right;transform-origin:100% 50%'>192</div>
<div class='a nm' style='left:871px;top:451px;height:19px;line-height:19px;white-space:pre;word-spacing:0.6px'>РезГрСт</div>
<div class='a num' style='left:1024.4px;top:451px;width:50px;height:19px;line-height:19px;text-align:right;transform-origin:100% 50%'>193</div>
<div class='a' style='left:868px;top:481px;width:205px;height:127px;background:#C00000'></div>
<div class='a' style='left:870px;top:485px;width:157px;height:17px;background:#fff;border:1px solid #8a8a8a;font-size:11.4px;line-height:15px;text-align:center;white-space:pre'>увеличить степень (+1)</div>
<div class='a' style='left:872px;top:507px;width:155px;height:17px;background:#fff;border:1px solid #8a8a8a;font-size:11.4px;line-height:15px;text-align:center;white-space:pre'>уменьшить степень (-1)</div>
<div class='a btn3d' style='left:884px;top:533px;width:133px;height:23px;font-size:11.05px;line-height:21px;text-align:center;white-space:pre'>функию в прогноз</div>
<div class='a' style='left:987px;top:561px;width:62px;height:17px;background:#fff;font-weight:bold;font-size:11.2px;line-height:14.5px;text-align:center'>Список</div>
<div class='a' style='left:987px;top:584px;width:63px;height:18px;background:#fff;font-weight:bold;font-size:10.9px;line-height:15.5px;text-align:center'>факторы</div>
<div class='a btn3d' style='left:876px;top:581px;width:21px;height:21px;font-size:9px;line-height:19px;text-align:center'>&lt;</div>
<div class='a btn3d' style='left:932px;top:581px;width:21px;height:21px;font-size:9px;line-height:19px;text-align:center'>&gt;</div>
<div class='a nb' style='left:909px;top:580px;height:20px;line-height:20px;font-size:15.5px;color:#fff;transform:scaleX(0.92)'>3</div>
<div class='a' style='left:1090px;top:89px;width:332px;height:19px;background:#C00000;color:#fff;font-weight:bold;font-size:13.4px;line-height:19px'><span class='a' style='left:103.5px;top:0'>факторы</span><span class='a' style='left:249.5px;top:0'>№</span><span class='a' style='left:279.5px;top:0'>k</span><span class='a' style='left:309.5px;top:0'>n</span></div>
<div class='a' style='left:1090px;top:108px;width:332px;height:868px;background:#fff;overflow:hidden'>
<div class='fr' style='top:0px;background:#404040'>
<span class='num' style='left:3.4px;transform-origin:0 50%;color:#000'>152</span>
<span class='nm' style='left:30px;color:#fff'><i class='eq' style='font-style:normal'>===</i> диагноз <i class='eq' style='font-style:normal'>===</i></span>
<span class='num' style='left:290px;width:44px;text-align:center;transform-origin:50% 50%;color:#fff'>0</span>
</div>
<div class='fr' style='top:19px'>
<span style='left:27px;width:246px;height:19px;background:#008080'></span>
<span class='num' style='left:3.4px;transform-origin:0 50%'>153</span>
<span class='nm' style='left:30px;color:#fff'>ЗЛО (k2)</span>
<span class='num' style='left:234px;width:44px;text-align:center;transform-origin:50% 50%;color:#fff'>5</span>
<span class='num' style='left:260px;width:44px;text-align:center;transform-origin:50% 50%'>2</span>
<span class='num' style='left:290.7px;width:44px;text-align:center;transform-origin:50% 50%'>48</span>
</div>
<div class='fr' style='top:38px'>
<span style='left:27px;width:246px;height:19px;background:#008080'></span>
<span class='num' style='left:3.4px;transform-origin:0 50%'>154</span>
<span class='nm' style='left:30px;color:#fff'>ЗФГ (k2)</span>
<span class='num' style='left:234px;width:44px;text-align:center;transform-origin:50% 50%;color:#fff'>6</span>
<span class='num' style='left:260px;width:44px;text-align:center;transform-origin:50% 50%'>2</span>
<span class='num' style='left:290.7px;width:44px;text-align:center;transform-origin:50% 50%'>48</span>
</div>
<div class='fr' style='top:57px'>
<span class='num' style='left:3.4px;transform-origin:0 50%'>155</span>
<span class='nm' style='left:30px;color:#000'>Верет  (k2)</span>
<span class='num' style='left:260px;width:44px;text-align:center;transform-origin:50% 50%'>2</span>
<span class='num' style='left:290.7px;width:44px;text-align:center;transform-origin:50% 50%'>48</span>
</div>
<div class='fr' style='top:76px'>
<span style='left:27px;width:246px;height:19px;background:#008080'></span>
<span class='num' style='left:3.4px;transform-origin:0 50%'>156</span>
<span class='nm' style='left:30px;color:#fff'>Липосаркома (k2)</span>
<span class='num' style='left:234px;width:44px;text-align:center;transform-origin:50% 50%;color:#fff'>7</span>
<span class='num' style='left:260px;width:44px;text-align:center;transform-origin:50% 50%'>2</span>
<span class='num' style='left:290.7px;width:44px;text-align:center;transform-origin:50% 50%'>48</span>
</div>
<div class='fr' style='top:95px'>
<span class='num' style='left:3.4px;transform-origin:0 50%'>157</span>
<span class='nm' style='left:30px;color:#000'>Радио. лейомиосаркома (k2)</span>
<span class='num' style='left:260px;width:44px;text-align:center;transform-origin:50% 50%'>2</span>
<span class='num' style='left:290.7px;width:44px;text-align:center;transform-origin:50% 50%'>48</span>
</div>
<div class='fr' style='top:114px'>
<span style='left:27px;width:246px;height:19px;background:#008080'></span>
<span class='num' style='left:3.4px;transform-origin:0 50%'>158</span>
<span class='nm' style='left:30px;color:#fff'>Хондросаркома (k2)</span>
<span class='num' style='left:234px;width:44px;text-align:center;transform-origin:50% 50%;color:#fff'>8</span>
<span class='num' style='left:260px;width:44px;text-align:center;transform-origin:50% 50%'>2</span>
<span class='num' style='left:290.7px;width:44px;text-align:center;transform-origin:50% 50%'>48</span>
</div>
<div class='fr' style='top:133px'>
<span style='left:27px;width:246px;height:19px;background:#008080'></span>
<span class='num' style='left:3.4px;transform-origin:0 50%'>159</span>
<span class='nm' style='left:30px;color:#fff'>Лейомиосаркома (k2)</span>
<span class='num' style='left:234px;width:44px;text-align:center;transform-origin:50% 50%;color:#fff'>9</span>
<span class='num' style='left:260px;width:44px;text-align:center;transform-origin:50% 50%'>2</span>
<span class='num' style='left:290.7px;width:44px;text-align:center;transform-origin:50% 50%'>48</span>
</div>
<div class='fr' style='top:152px'>
<span style='left:27px;width:246px;height:19px;background:#008080'></span>
<span class='num' style='left:3.4px;transform-origin:0 50%'>160</span>
<span class='nm' style='left:30px;color:#fff'>Ангиосаркома (k2)</span>
<span class='num' style='left:234px;width:44px;text-align:center;transform-origin:50% 50%;color:#fff'>10</span>
<span class='num' style='left:260px;width:44px;text-align:center;transform-origin:50% 50%'>2</span>
<span class='num' style='left:290.7px;width:44px;text-align:center;transform-origin:50% 50%'>48</span>
</div>
<div class='fr' style='top:171px'>
<span class='num' style='left:3.4px;transform-origin:0 50%'>161</span>
<span class='nm' style='left:30px;color:#000'>Карциносаркома (k2)</span>
<span class='num' style='left:260px;width:44px;text-align:center;transform-origin:50% 50%'>2</span>
<span class='num' style='left:290.7px;width:44px;text-align:center;transform-origin:50% 50%'>48</span>
</div>
<div class='fr' style='top:190px'>
<span style='left:27px;width:246px;height:19px;background:#008080'></span>
<span class='num' style='left:3.4px;transform-origin:0 50%'>162</span>
<span class='nm' style='left:30px;color:#fff'>Фибросаркома (k2)</span>
<span class='num' style='left:234px;width:44px;text-align:center;transform-origin:50% 50%;color:#fff'>11</span>
<span class='num' style='left:260px;width:44px;text-align:center;transform-origin:50% 50%'>2</span>
<span class='num' style='left:290.7px;width:44px;text-align:center;transform-origin:50% 50%'>48</span>
</div>
<div class='fr' style='top:209px'>
<span class='num' style='left:3.4px;transform-origin:0 50%'>163</span>
<span class='nm' style='left:30px;color:#000'>Радио. ангиосаркома (k2)</span>
<span class='num' style='left:260px;width:44px;text-align:center;transform-origin:50% 50%'>2</span>
<span class='num' style='left:290.7px;width:44px;text-align:center;transform-origin:50% 50%'>48</span>
</div>
<div class='fr' style='top:228px;background:#404040'>
<span class='num' style='left:3.4px;transform-origin:0 50%;color:#000'>164</span>
<span class='nm' style='left:30px;color:#fff'><i class='eq' style='font-style:normal'>===</i> диагноз <i class='eq' style='font-style:normal'>===</i></span>
<span class='num' style='left:290px;width:44px;text-align:center;transform-origin:50% 50%;color:#fff'>0</span>
</div>
<div class='fr' style='top:247px'>
<span class='num' style='left:3.4px;transform-origin:0 50%'>165</span>
<span class='nm' style='left:30px;color:#000'>ЗЛО  (k2)</span>
<span class='num' style='left:260px;width:44px;text-align:center;transform-origin:50% 50%'>2</span>
<span class='num' style='left:290.7px;width:44px;text-align:center;transform-origin:50% 50%'>48</span>
</div>
<div class='fr' style='top:266px'>
<span class='num' style='left:3.4px;transform-origin:0 50%'>166</span>
<span class='nm' style='left:30px;color:#000'>ЗФГ (k2)</span>
<span class='num' style='left:260px;width:44px;text-align:center;transform-origin:50% 50%'>2</span>
<span class='num' style='left:290.7px;width:44px;text-align:center;transform-origin:50% 50%'>48</span>
</div>
<div class='fr' style='top:285px'>
<span class='num' style='left:3.4px;transform-origin:0 50%'>167</span>
<span class='nm' style='left:30px;color:#000'>Верет  (k2)</span>
<span class='num' style='left:260px;width:44px;text-align:center;transform-origin:50% 50%'>2</span>
<span class='num' style='left:290.7px;width:44px;text-align:center;transform-origin:50% 50%'>48</span>
</div>
<div class='fr' style='top:304px'>
<span class='num' style='left:3.4px;transform-origin:0 50%'>168</span>
<span class='nm' style='left:30px;color:#000'>Липосаркома (k2)</span>
<span class='num' style='left:260px;width:44px;text-align:center;transform-origin:50% 50%'>2</span>
<span class='num' style='left:290.7px;width:44px;text-align:center;transform-origin:50% 50%'>48</span>
</div>
<div class='fr' style='top:323px'>
<span class='num' style='left:3.4px;transform-origin:0 50%'>169</span>
<span class='nm' style='left:30px;color:#000'>РИД (k2)</span>
<span class='num' style='left:260px;width:44px;text-align:center;transform-origin:50% 50%'>2</span>
<span class='num' style='left:290.7px;width:44px;text-align:center;transform-origin:50% 50%'>48</span>
</div>
<div class='fr' style='top:342px'>
<span class='num' style='left:3.4px;transform-origin:0 50%'>170</span>
<span class='nm' style='left:30px;color:#000'>Хондросаркома (k2)</span>
<span class='num' style='left:260px;width:44px;text-align:center;transform-origin:50% 50%'>2</span>
<span class='num' style='left:290.7px;width:44px;text-align:center;transform-origin:50% 50%'>48</span>
</div>
<div class='fr' style='top:361px'>
<span class='num' style='left:3.4px;transform-origin:0 50%'>171</span>
<span class='nm' style='left:30px;color:#000'>Лейомиосаркома (k2)</span>
<span class='num' style='left:260px;width:44px;text-align:center;transform-origin:50% 50%'>2</span>
<span class='num' style='left:290.7px;width:44px;text-align:center;transform-origin:50% 50%'>48</span>
</div>
<div class='fr' style='top:380px'>
<span class='num' style='left:3.4px;transform-origin:0 50%'>172</span>
<span class='nm' style='left:30px;color:#000'>Ангиосаркома (k2)</span>
<span class='num' style='left:260px;width:44px;text-align:center;transform-origin:50% 50%'>2</span>
<span class='num' style='left:290.7px;width:44px;text-align:center;transform-origin:50% 50%'>48</span>
</div>
<div class='fr' style='top:399px'>
<span class='num' style='left:3.4px;transform-origin:0 50%'>173</span>
<span class='nm' style='left:30px;color:#000'>Фибросаркома (k2)</span>
<span class='num' style='left:260px;width:44px;text-align:center;transform-origin:50% 50%'>2</span>
<span class='num' style='left:290.7px;width:44px;text-align:center;transform-origin:50% 50%'>48</span>
</div>
<div class='fr' style='top:418px'>
<span class='num' style='left:3.4px;transform-origin:0 50%'>174</span>
<span class='nm' style='left:30px;color:#000'>Рабдомиосаркома   (k2)</span>
<span class='num' style='left:260px;width:44px;text-align:center;transform-origin:50% 50%'>2</span>
<span class='num' style='left:290.7px;width:44px;text-align:center;transform-origin:50% 50%'>48</span>
</div>
<div class='fr' style='top:437px;background:#404040'>
<span class='num' style='left:3.4px;transform-origin:0 50%;color:#000'>175</span>
<span class='nm' style='left:30px;color:#fff'><i class='eq' style='font-style:normal'>===</i> G <i class='eq' style='font-style:normal'>===</i></span>
<span class='num' style='left:290px;width:44px;text-align:center;transform-origin:50% 50%;color:#fff'>0</span>
</div>
<div class='fr' style='top:456px'>
<span class='num' style='left:3.4px;transform-origin:0 50%'>176</span>
<span class='nm' style='left:30px;color:#000'>G1  (k2)</span>
<span class='num' style='left:260px;width:44px;text-align:center;transform-origin:50% 50%'>2</span>
<span class='num' style='left:290.7px;width:44px;text-align:center;transform-origin:50% 50%'>48</span>
</div>
<div class='fr' style='top:475px'>
<span style='left:27px;width:246px;height:19px;background:#008080'></span>
<span class='num' style='left:3.4px;transform-origin:0 50%'>177</span>
<span class='nm' style='left:30px;color:#fff'>G2  (k2)</span>
<span class='num' style='left:234px;width:44px;text-align:center;transform-origin:50% 50%;color:#fff'>2</span>
<span class='num' style='left:260px;width:44px;text-align:center;transform-origin:50% 50%'>2</span>
<span class='num' style='left:290.7px;width:44px;text-align:center;transform-origin:50% 50%'>48</span>
</div>
<div class='fr' style='top:494px'>
<span style='left:27px;width:246px;height:19px;background:#008080'></span>
<span class='num' style='left:3.4px;transform-origin:0 50%'>178</span>
<span class='nm' style='left:30px;color:#fff'>G3  (k2)</span>
<span class='num' style='left:234px;width:44px;text-align:center;transform-origin:50% 50%;color:#fff'>3</span>
<span class='num' style='left:260px;width:44px;text-align:center;transform-origin:50% 50%'>2</span>
<span class='num' style='left:290.7px;width:44px;text-align:center;transform-origin:50% 50%'>48</span>
</div>
<div class='fr' style='top:513px'>
<span style='left:27px;width:246px;height:19px;background:#008080'></span>
<span class='num' style='left:3.4px;transform-origin:0 50%'>179</span>
<span class='nm' style='left:30px;color:#fff'>Gx  (k2)</span>
<span class='num' style='left:234px;width:44px;text-align:center;transform-origin:50% 50%;color:#fff'>4</span>
<span class='num' style='left:260px;width:44px;text-align:center;transform-origin:50% 50%'>2</span>
<span class='num' style='left:290.7px;width:44px;text-align:center;transform-origin:50% 50%'>48</span>
</div>
<div class='fr' style='top:532px;background:#404040'>
<span class='num' style='left:3.4px;transform-origin:0 50%;color:#000'>180</span>
<span class='nm' style='left:30px;color:#fff'><i class='eq' style='font-style:normal'>===</i> Объем лечения  <i class='eq' style='font-style:normal'>===</i></span>
<span class='num' style='left:290px;width:44px;text-align:center;transform-origin:50% 50%;color:#fff'>0</span>
</div>
<div class='fr' style='top:551px'>
<span class='num' style='left:3.4px;transform-origin:0 50%'>181</span>
<span class='nm' style='left:30px;color:#000'>хирургическое  (k2)</span>
<span class='num' style='left:260px;width:44px;text-align:center;transform-origin:50% 50%'>2</span>
<span class='num' style='left:290.7px;width:44px;text-align:center;transform-origin:50% 50%'>0</span>
</div>
<div class='fr' style='top:570px'>
<span class='num' style='left:3.4px;transform-origin:0 50%'>182</span>
<span class='nm' style='left:30px;color:#000'>комбинированное (k2)</span>
<span class='num' style='left:260px;width:44px;text-align:center;transform-origin:50% 50%'>2</span>
<span class='num' style='left:290.7px;width:44px;text-align:center;transform-origin:50% 50%'>0</span>
</div>
<div class='fr' style='top:589px'>
<span class='num' style='left:3.4px;transform-origin:0 50%'>183</span>
<span class='nm' style='left:30px;color:#000'>комплексное  (k2)</span>
<span class='num' style='left:260px;width:44px;text-align:center;transform-origin:50% 50%'>2</span>
<span class='num' style='left:290.7px;width:44px;text-align:center;transform-origin:50% 50%'>0</span>
</div>
<div class='fr' style='top:608px;background:#404040'>
<span class='num' style='left:3.4px;transform-origin:0 50%;color:#000'>184</span>
<span class='nm' style='left:30px;color:#fff'><i class='eq' style='font-style:normal'>===</i> Операция <i class='eq' style='font-style:normal'>===</i></span>
<span class='num' style='left:290px;width:44px;text-align:center;transform-origin:50% 50%;color:#fff'>0</span>
</div>
<div class='fr' style='top:627px'>
<span style='left:27px;width:246px;height:19px;background:#008080'></span>
<span class='num' style='left:3.4px;transform-origin:0 50%'>185</span>
<span class='nm' style='left:30px;color:#fff'>МЭ с рекБекк   (k2)</span>
<span class='num' style='left:234px;width:44px;text-align:center;transform-origin:50% 50%;color:#fff'>12</span>
<span class='num' style='left:260px;width:44px;text-align:center;transform-origin:50% 50%'>2</span>
<span class='num' style='left:290.7px;width:44px;text-align:center;transform-origin:50% 50%'>48</span>
</div>
<div class='fr' style='top:646px'>
<span style='left:27px;width:246px;height:19px;background:#008080'></span>
<span class='num' style='left:3.4px;transform-origin:0 50%'>186</span>
<span class='nm' style='left:30px;color:#fff'>МЭ  (k2)</span>
<span class='num' style='left:234px;width:44px;text-align:center;transform-origin:50% 50%;color:#fff'>13</span>
<span class='num' style='left:260px;width:44px;text-align:center;transform-origin:50% 50%'>2</span>
<span class='num' style='left:290.7px;width:44px;text-align:center;transform-origin:50% 50%'>48</span>
</div>
<div class='fr' style='top:665px'>
<span style='left:27px;width:246px;height:19px;background:#008080'></span>
<span class='num' style='left:3.4px;transform-origin:0 50%'>187</span>
<span class='nm' style='left:30px;color:#fff'>РМЭ  (k2)</span>
<span class='num' style='left:234px;width:44px;text-align:center;transform-origin:50% 50%;color:#fff'>14</span>
<span class='num' style='left:260px;width:44px;text-align:center;transform-origin:50% 50%'>2</span>
<span class='num' style='left:290.7px;width:44px;text-align:center;transform-origin:50% 50%'>48</span>
</div>
<div class='fr' style='top:684px'>
<span style='left:27px;width:246px;height:19px;background:#008080'></span>
<span class='num' style='left:3.4px;transform-origin:0 50%'>188</span>
<span class='nm' style='left:30px;color:#fff'>РМЭ с рекБекк  (k2)</span>
<span class='num' style='left:234px;width:44px;text-align:center;transform-origin:50% 50%;color:#fff'>15</span>
<span class='num' style='left:260px;width:44px;text-align:center;transform-origin:50% 50%'>2</span>
<span class='num' style='left:290.7px;width:44px;text-align:center;transform-origin:50% 50%'>48</span>
</div>
<div class='fr' style='top:703px'>
<span style='left:27px;width:246px;height:19px;background:#008080'></span>
<span class='num' style='left:3.4px;transform-origin:0 50%'>189</span>
<span class='nm' style='left:30px;color:#fff'>Сектор  (k2)</span>
<span class='num' style='left:234px;width:44px;text-align:center;transform-origin:50% 50%;color:#fff'>16</span>
<span class='num' style='left:260px;width:44px;text-align:center;transform-origin:50% 50%'>2</span>
<span class='num' style='left:290.7px;width:44px;text-align:center;transform-origin:50% 50%'>48</span>
</div>
<div class='fr' style='top:722px'>
<span class='num' style='left:3.4px;transform-origin:0 50%'>190</span>
<span class='nm' style='left:30px;color:#000'>МЭ с рекИ   (k2)</span>
<span class='num' style='left:260px;width:44px;text-align:center;transform-origin:50% 50%'>2</span>
<span class='num' style='left:290.7px;width:44px;text-align:center;transform-origin:50% 50%'>48</span>
</div>
<div class='fr' style='top:741px'>
<span style='left:27px;width:246px;height:19px;background:#008080'></span>
<span class='num' style='left:3.4px;transform-origin:0 50%'>191</span>
<span class='nm' style='left:30px;color:#fff'>Иссечение опухоли (k2)</span>
<span class='num' style='left:234px;width:44px;text-align:center;transform-origin:50% 50%;color:#fff'>17</span>
<span class='num' style='left:260px;width:44px;text-align:center;transform-origin:50% 50%'>2</span>
<span class='num' style='left:290.7px;width:44px;text-align:center;transform-origin:50% 50%'>48</span>
</div>
<div class='fr' style='top:760px'>
<span style='left:27px;width:246px;height:19px;background:#008080'></span>
<span class='num' style='left:3.4px;transform-origin:0 50%'>192</span>
<span class='nm' style='left:30px;color:#fff'>РадРез  (k2)</span>
<span class='num' style='left:234px;width:44px;text-align:center;transform-origin:50% 50%;color:#fff'>18</span>
<span class='num' style='left:260px;width:44px;text-align:center;transform-origin:50% 50%'>2</span>
<span class='num' style='left:290.7px;width:44px;text-align:center;transform-origin:50% 50%'>48</span>
</div>
<div class='fr' style='top:779px'>
<span style='left:27px;width:246px;height:19px;background:#008080'></span>
<span class='num' style='left:3.4px;transform-origin:0 50%'>193</span>
<span class='nm' style='left:30px;color:#fff'>РезГрСт  (k2)</span>
<span class='num' style='left:234px;width:44px;text-align:center;transform-origin:50% 50%;color:#fff'>19</span>
<span class='num' style='left:260px;width:44px;text-align:center;transform-origin:50% 50%'>2</span>
<span class='num' style='left:290.7px;width:44px;text-align:center;transform-origin:50% 50%'>48</span>
</div>
<div class='fr' style='top:798px'>
<span class='num' style='left:3.4px;transform-origin:0 50%'>194</span>
<span class='nm' style='left:30px;color:#000'>РМЭ реекБГМ сTRAM   (k2)</span>
<span class='num' style='left:260px;width:44px;text-align:center;transform-origin:50% 50%'>2</span>
<span class='num' style='left:290.7px;width:44px;text-align:center;transform-origin:50% 50%'>48</span>
</div>
<div class='fr' style='top:817px;background:#404040'>
<span class='num' style='left:3.4px;transform-origin:0 50%;color:#000'>195</span>
<span class='nm' style='left:30px;color:#fff'><i class='eq' style='font-style:normal'>===</i> Объем лечения  <i class='eq' style='font-style:normal'>===</i></span>
<span class='num' style='left:290px;width:44px;text-align:center;transform-origin:50% 50%;color:#fff'>0</span>
</div>
<div class='fr' style='top:836px'>
<span class='num' style='left:3.4px;transform-origin:0 50%'>196</span>
<span class='nm' style='left:30px;color:#000'>хирургическое  (k2)</span>
<span class='num' style='left:260px;width:44px;text-align:center;transform-origin:50% 50%'>2</span>
<span class='num' style='left:290.7px;width:44px;text-align:center;transform-origin:50% 50%'>48</span>
</div>
<div class='fr' style='top:855px'>
<span class='num' style='left:3.4px;transform-origin:0 50%'>197</span>
<span class='nm' style='left:30px;color:#000'>комбинированное (k2)</span>
<span class='num' style='left:260px;width:44px;text-align:center;transform-origin:50% 50%'>2</span>
<span class='num' style='left:290.7px;width:44px;text-align:center;transform-origin:50% 50%'>48</span>
</div>
</div>
<div class='a' style='left:1422px;top:89px;width:4px;height:887px;background:linear-gradient(90deg,#92AAD0,#A9BEDD)'></div>
<div class='a' style='left:1426px;top:89px;width:17px;height:887px;background:repeating-conic-gradient(#ffffff 0 25%,#efefef 0 50%) 0 0/2px 2px'></div>
<div class='a' style='left:1426px;top:89px;width:17px;height:16px;background:#F0F0F0;border:1px solid;border-color:#fff #696969 #696969 #fff;box-shadow:inset -1px -1px 0 #A0A0A0'></div>
<svg class='a' style='left:1426px;top:89px' width='17' height='16'><polygon points='4,10.0 12,10.0 8,6.0' fill='#000'/></svg>
<div class='a' style='left:1426px;top:938px;width:17px;height:16px;background:#F0F0F0;border:1px solid;border-color:#fff #696969 #696969 #fff;box-shadow:inset -1px -1px 0 #A0A0A0'></div>
<div class='a' style='left:1426px;top:960px;width:17px;height:16px;background:#F0F0F0;border:1px solid;border-color:#fff #696969 #696969 #fff;box-shadow:inset -1px -1px 0 #A0A0A0'></div>
<svg class='a' style='left:1426px;top:960px' width='17' height='16'><polygon points='4,6.0 12,6.0 8,10.0' fill='#000'/></svg>
<div class='a' style='left:3px;top:987px;width:1449px;height:52px;background:linear-gradient(180deg,#6A7594 0,#565f78 25%,#3a3f4c 49.9%,#0d0d0f 50%,#10131c 70%,#2B3A63 100%)'></div>
<div class='a' style='left:0;top:1040px;width:1454px;height:8px;background:#000'></div>
<div class='tb' style='left:48px;width:41px;background:#E1E1E1'></div>
<div class='tb' style='left:97px;width:42px;background:#E1E1E1'></div>
<div class='tb' style='left:146px;width:42px;background:#E1E1E1'></div>
<div class='tb' style='left:194px;width:198px;background:#F0F0F0'></div>
<div class='tb' style='left:401px;width:42px;background:#FFFFFF'></div>
<div class='tb' style='left:448px;width:47px;background:#F0F0F0'></div>
<div class='tb' style='left:501px;width:43px;background:#F0F0F0'></div>
<div class='tb' style='left:551px;width:43px;background:#FFFFFF'></div>
<div class='tb' style='left:650px;width:43px;background:#FFFFFF'></div>
<div class='tb' style='left:698px;width:43px;background:#C0C0C0'></div>
<div class='tb' style='left:748px;width:43px;background:#FFFFFF'></div>
<div class='a' style='left:601px;top:993px;width:43px;height:37px;background:#F0F0F0;border:1px solid #1a0508;box-shadow:inset 1px 1px 0 #fff, inset -1px -1px 0 #8a8a8a'></div>
<svg class='a' style='left:600px;top:992px' width='46' height='40' shape-rendering='crispEdges'><g stroke='#000' stroke-width='1' stroke-dasharray='1 1' fill='none'><path d='M7 5.5 H38 M7 33.5 H38 M5.5 7 V32 M39.5 7 V32'/></g><rect x='6' y='6' width='1' height='1'/><rect x='38' y='6' width='1' height='1'/><rect x='6' y='32' width='1' height='1'/><rect x='38' y='32' width='1' height='1'/></svg>
<svg class='a' style='left:4px;top:988px' width='140' height='48' viewBox='0 0 1454 499'>
<rect x='62' y='60' width='313' height='315' rx='58' fill='#fff'/>
<polygon points='112,160 160,112 330,282 282,330' fill='#DDAE68'/>
<polygon points='112,160 136,136 306,306 282,330' fill='#CF9A50'/>
<polygon points='262,126 314,178 186,306 134,254' fill='#3D8FCC'/>
<polygon points='262,126 280,144 152,272 134,254' fill='#7DB9E4'/>
<polygon points='296,160 314,178 186,306 168,288' fill='#2C6FA6'/>
<polygon points='262,126 283,105 335,157 314,178' fill='#E97F92'/>
<polygon points='262,126 270,118 322,170 314,178' fill='#C9CDD2'/>
<polygon points='134,254 186,306 116,326' fill='#EBCFA5'/>
<polygon points='116,326 122,304 138,320' fill='#444'/>
</svg>
<svg class='a' style='left:44px;top:990px' width='100' height='42' viewBox='0 0 1454 611'>
<g stroke='#000' stroke-width='14' fill='#fff' stroke-linejoin='round'>
<polygon points='135,490 410,490 545,335 568,325 568,348 425,532 150,532' fill='#FF0000'/>
<rect x='445' y='238' width='55' height='165'/>
<path d='M472 250 V395' fill='none' stroke-width='10'/>
<path d='M185 98 L318 95 Q362 110 360 150 L360 200 L290 198 L232 186 L185 158 Z'/>
<ellipse cx='318' cy='160' rx='24' ry='27'/>
<path d='M130 102 H185 M130 158 H185 M178 75 V168' fill='none' stroke-width='16'/>
<rect x='207' y='198' width='238' height='135' rx='10'/>
<rect x='178' y='333' width='232' height='148' rx='10'/>
</g>
<g stroke='#8c8c8c' stroke-width='9'><path d='M235 240 H360 M235 268 H300 M235 297 H330 M350 297 H362'/></g>
<g stroke='#222' stroke-width='10' stroke-dasharray='9 6'><path d='M220 370 H330 M220 400 H300 M215 430 H330'/></g>
<path d='M375 415 L392 436 L375 458 L358 436 Z' fill='none' stroke='#555' stroke-width='6'/>
<path d='M235 480 Q245 455 258 480 M310 480 Q320 455 333 480' fill='#000' stroke='#000' stroke-width='6'/>
<g fill='#FF00FF'><rect x='175' y='505' width='225' height='14' opacity='0.0'/></g>
<path d='M175 512 H400' stroke='#FF00FF' stroke-width='12' stroke-dasharray='14 15'/>
<polygon points='425,445 460,440 440,465' fill='#FF00FF'/><polygon points='515,345 545,338 525,362' fill='#FF00FF'/>
<g stroke='#000' stroke-width='14' stroke-linejoin='round'>
<polygon points='1130,445 1300,258 1300,375 1145,532' fill='#C4004E'/>
<polygon points='895,470 1130,470 1145,532 930,532' fill='#C4004E'/>
<path d='M1100 215 Q1110 185 1140 185 L1265 185 Q1300 195 1300 258 L1130 445 L1100 445 Z' fill='#fff'/>
<path d='M1120 262 Q1150 215 1200 200 M1135 300 Q1165 250 1225 228 M1150 335 Q1180 285 1250 255 M1120 440 Q1150 360 1285 270' fill='none' stroke-width='12'/>
<polygon points='980,78 1130,238 1010,292 860,192' fill='#fff'/>
<rect x='897' y='328' width='205' height='112' rx='14' fill='#fff'/>
<rect x='852' y='438' width='242' height='18' fill='#FF0000' stroke-width='6'/>
</g>
<g stroke='#777' stroke-width='8'><path d='M935 205 L995 268 M965 178 L1030 248 M995 152 L1060 222 M1025 135 L1075 190'/></g>
<g fill='#333'><rect x='935' y='350' width='13' height='12'/><rect x='965' y='350' width='13' height='12'/><rect x='995' y='350' width='13' height='12'/><rect x='935' y='380' width='13' height='12'/><rect x='965' y='380' width='13' height='12'/><rect x='995' y='380' width='13' height='12'/><rect x='1025' y='380' width='13' height='12'/><rect x='1052' y='380' width='13' height='12'/></g>
<g fill='#FF10E0'><circle cx='1215' cy='176' r='17'/><circle cx='1157' cy='230' r='15'/><circle cx='1082' cy='320' r='16'/></g>
</svg>
<svg class='a' style='left:140px;top:988px' width='260' height='48' viewBox='0 0 1454 268'>
<rect x='75' y='68' width='137' height='135' fill='#fff' stroke='#000' stroke-width='4'/>
<path d='M97.8 68 V203 M75 90.5 H212 M120.6 68 V203 M75 113.0 H212 M143.4 68 V203 M75 135.5 H212 M166.2 68 V203 M75 158.0 H212 M189.0 68 V203 M75 180.5 H212' stroke='#b0b0b0' stroke-width='4' fill='none'/>
<rect x='122.6' y='91.5' width='19' height='19' fill='#000'/>
<rect x='122.6' y='114.0' width='19' height='19' fill='#000'/>
<rect x='99.8' y='136.5' width='19' height='19' fill='#000'/>
<rect x='145.4' y='159.0' width='19' height='19' fill='#000'/>
<polygon points='208,62 228,74 186,146 166,134' fill='#FFEE00' stroke='#000' stroke-width='4'/>
<polygon points='166,134 186,146 164,160' fill='#000'/>
<polygon points='208,62 214,54 232,64 228,74' fill='#D00000' stroke='#600' stroke-width='3'/>
</svg>
<svg class='a' style='left:390px;top:980px' width='210' height='68' viewBox='0 0 1454 471'>
<path d='M135 130 L192 187' stroke='#868686' stroke-width='14' fill='none'/><path d='M144 187 L192 187 L192 139' stroke='#868686' stroke-width='14' fill='none' stroke-linejoin='miter'/>
<path d='M255 185 L312 128' stroke='#868686' stroke-width='14' fill='none'/><path d='M264 128 L312 128 L312 176' stroke='#868686' stroke-width='14' fill='none' stroke-linejoin='miter'/>
<path d='M190 245 L133 302' stroke='#868686' stroke-width='14' fill='none'/><path d='M181 302 L133 302 L133 254' stroke='#868686' stroke-width='14' fill='none' stroke-linejoin='miter'/>
<path d='M255 245 L312 302' stroke='#868686' stroke-width='14' fill='none'/><path d='M264 302 L312 302 L312 254' stroke='#868686' stroke-width='14' fill='none' stroke-linejoin='miter'/>
<g stroke='#000' stroke-width='6' stroke-linejoin='round'>
<polygon points='452,150 540,245 540,305 452,235' fill='#FFF68F'/>
<polygon points='480,190 520,150 545,175 600,245 545,300 540,305 540,245' fill='#FFF9B0'/>
<polygon points='515,190 578,120 668,212 605,275' fill='#fff'/>
</g>
<g stroke='#00E5FF' stroke-width='7'><path d='M545 185 L585 145 M560 200 L600 160 M575 215 L615 175 M590 230 L630 190 M605 245 L645 205'/></g>
<path d='M600 225 L620 225 L622 250 L650 232 L655 262 L628 290 L628 312 L592 312 L592 270 Z' fill='#fff' stroke='#000' stroke-width='6'/>
<path d='M585 316 L630 316' stroke='#FF00FF' stroke-width='6'/>
<g transform='translate(747.8 69.2) scale(0.4762)'>
<rect x='72' y='100' width='568' height='14' fill='#173E78'/><rect x='72' y='114' width='568' height='12' fill='#D6E6F8'/>
<rect x='100' y='145' width='525' height='305' fill='#B2B2B2'/>
<rect x='112' y='157' width='90' height='46' fill='#EAEAEA'/>
<rect x='214' y='157' width='90' height='46' fill='#EAEAEA'/>
<rect x='316' y='157' width='90' height='46' fill='#EAEAEA'/>
<rect x='418' y='157' width='90' height='46' fill='#EAEAEA'/>
<rect x='520' y='157' width='90' height='46' fill='#EAEAEA'/>
<rect x='112' y='215' width='90' height='46' fill='#EAEAEA'/>
<rect x='214' y='215' width='90' height='46' fill='#EAEAEA'/>
<rect x='316' y='215' width='90' height='46' fill='#EAEAEA'/>
<rect x='418' y='215' width='90' height='46' fill='#EAEAEA'/>
<rect x='520' y='215' width='90' height='46' fill='#EAEAEA'/>
<rect x='112' y='273' width='90' height='46' fill='#EAEAEA'/>
<rect x='214' y='273' width='90' height='46' fill='#EAEAEA'/>
<rect x='316' y='273' width='90' height='46' fill='#EAEAEA'/>
<rect x='418' y='273' width='90' height='46' fill='#EAEAEA'/>
<rect x='520' y='273' width='90' height='46' fill='#EAEAEA'/>
<rect x='112' y='331' width='90' height='46' fill='#EAEAEA'/>
<rect x='214' y='331' width='90' height='46' fill='#EAEAEA'/>
<rect x='316' y='331' width='90' height='46' fill='#EAEAEA'/>
<rect x='418' y='331' width='90' height='46' fill='#EAEAEA'/>
<rect x='520' y='331' width='90' height='46' fill='#EAEAEA'/>
<rect x='112' y='389' width='90' height='46' fill='#EAEAEA'/>
<rect x='214' y='389' width='90' height='46' fill='#EAEAEA'/>
<rect x='316' y='389' width='90' height='46' fill='#EAEAEA'/>
<rect x='418' y='389' width='90' height='46' fill='#EAEAEA'/>
<rect x='520' y='389' width='90' height='46' fill='#EAEAEA'/>
<rect x='72' y='482' width='568' height='11' fill='#7a7a7a'/>
</g>
<g stroke='#000' stroke-width='6.9' shape-rendering='crispEdges'>
<rect x='1168' y='158' width='48' height='152' fill='#10C010'/>
<rect x='1216' y='130' width='48' height='180' fill='#E2DA78'/>
<rect x='1268' y='158' width='44' height='152' fill='#B884D0'/>
<rect x='1318' y='212' width='46' height='98' fill='#E888BE'/>
</g>
<rect x='1180' y='162' width='9' height='144' fill='#60E860'/><rect x='1228' y='134' width='9' height='172' fill='#F0EAA0'/><rect x='1278' y='162' width='8' height='144' fill='#D0A8E4'/><rect x='1328' y='216' width='8' height='90' fill='#F4B0D8'/>
<path d='M1145 314 L1390 314' stroke='#000' stroke-width='9'/>
</svg>
<svg class='a' style='left:598px;top:990px' width='100' height='42' viewBox='0 0 1454 611'>
<path d='M150 380 V445 M180 350 V430 M210 345 V490 M240 340 V400 M268 335 V435 M297 315 V370 M326 305 V375 M355 295 V345 M384 265 V375 M413 290 V330 M430 175 V300 M460 225 V310 M490 235 V290 M518 180 V290 M535 215 V315 M560 180 V245 M578 150 V215' stroke='#000' stroke-width='14.54' fill='none' shape-rendering='crispEdges'/>
<path d='M120 415 L585 205' stroke='#008A00' stroke-width='15' fill='none'/>
<path d='M900 405 V492 M970 290 V420 M1060 145 V245 M1150 230 V348 M1235 190 V318' stroke='#000' stroke-width='14.54' fill='none' shape-rendering='crispEdges'/>
<path d='M900 405 L970 290 L1060 145 L1150 230 L1235 190' stroke='#FF0000' stroke-width='14' fill='none'/>
<path d='M900 492 L970 420 L1060 245 L1150 348 L1235 318' stroke='#007A00' stroke-width='16' fill='none'/>
<circle cx='900' cy='405' r='22' fill='#fff' stroke='#FF0000' stroke-width='14'/>
<circle cx='970' cy='290' r='22' fill='#fff' stroke='#FF0000' stroke-width='14'/>
<circle cx='1060' cy='145' r='22' fill='#fff' stroke='#FF0000' stroke-width='14'/>
<circle cx='1150' cy='230' r='22' fill='#fff' stroke='#FF0000' stroke-width='14'/>
<circle cx='1235' cy='190' r='22' fill='#fff' stroke='#FF0000' stroke-width='14'/>
<circle cx='900' cy='492' r='22' fill='#fff' stroke='#007A00' stroke-width='15'/>
<circle cx='970' cy='420' r='22' fill='#fff' stroke='#007A00' stroke-width='15'/>
<circle cx='1060' cy='245' r='22' fill='#fff' stroke='#007A00' stroke-width='15'/>
<circle cx='1150' cy='348' r='22' fill='#fff' stroke='#007A00' stroke-width='15'/>
<circle cx='1235' cy='318' r='22' fill='#fff' stroke='#007A00' stroke-width='15'/>
</svg>
<svg class='a' style='left:270px;top:990px' width='50' height='40' viewBox='0 0 1310 1048'>
<g stroke='#000' stroke-width='26' stroke-linejoin='round' stroke-linecap='round'>
<polygon points='240,480 350,385 480,325 590,325 590,560 420,705 400,870 350,850 240,750' fill='#00FFFF'/>
<polygon points='590,640 870,730 900,780 830,850 720,900 480,900 410,850 420,770' fill='#FFFF00'/>
<polygon points='600,310 740,165 810,165 960,300 960,740 900,770 870,730 600,630' fill='#FF0000'/>
<path d='M240 610 L390 700 L400 870 M590 548 L400 700 M590 600 L430 745' fill='none'/>
<path d='M600 345 L900 400 L960 380 M900 400 L900 745' fill='none'/>
<path d='M420 822 L730 822 L880 770' fill='none'/>
</g></svg>
<svg class='a' style='left:696px;top:990px' width='100' height='42' viewBox='0 0 1454 611'>
<rect x='115' y='100' width='440' height='395' fill='#fff'/>
<path d='M195 415 L225 340 L265 235 Q300 180 335 200 L385 228 L430 195 L475 135 Q500 128 508 165 L520 250 L520 415 Z' fill='#BEBEBE'/>
<path d='M195 415 L225 340 L265 235 Q300 180 335 200 L385 228 L430 195 L475 135 Q500 128 508 165 L520 250' fill='none' stroke='#D070B8' stroke-width='7' stroke-dasharray='8 30' opacity='0.7'/>
<path d='M152 322 L160 412' stroke='#6FA86F' stroke-width='8' opacity='0.8'/>
<path d='M122 452 H200 M455 450 H545' stroke='#4a5a4a' stroke-width='12' stroke-dasharray='8 5' opacity='0.7'/>
<path d='M340 470 H430' stroke='#333' stroke-width='12' stroke-dasharray='10 4'/>
<polygon points='885,290 930,250 1000,200 1040,150 1080,190 1125,145 1165,215 1190,320 1215,280 1240,400 1245,490 1180,440 1130,470 1060,475 990,450 930,410 885,380' fill='#FF7070' opacity='0.38'/>
<polygon points='985,235 1035,145 1075,192 1125,140 1165,220 1185,310 1210,285 1235,425 1195,430 1150,335 1100,300 1050,280 1000,290' fill='#FF1515' opacity='0.88'/>
<polygon points='890,222 930,205 962,232 1000,222 1042,232 992,270 940,292 893,285' fill='#2626E0' opacity='0.85'/>
<polygon points='905,240 930,228 950,250 920,268' fill='#8080F0' opacity='0.8'/>
<polygon points='985,302 1012,282 1050,297 1080,332 1060,366 1010,366 980,342' fill='#DCE6FA'/>
<path d='M1010 300 L1020 340 L1040 305' stroke='#FF6060' stroke-width='8' fill='none' opacity='0.7'/>
<path d='M1000 398 Q1050 392 1092 366 L1130 382' stroke='#2030E0' stroke-width='15' fill='none' opacity='0.9'/>
<path d='M930 410 Q980 378 1012 400 Q1060 422 1100 386 Q1150 400 1205 432' stroke='#F03030' stroke-width='12' fill='none' opacity='0.7'/>
<path d='M990 450 Q1050 480 1100 452 Q1150 470 1200 462 M1240 400 L1246 488' stroke='#F8A0A0' stroke-width='6' fill='none' opacity='0.7'/>
<path d='M1020 440 Q1060 462 1100 436' stroke='#A0A8F8' stroke-width='6' fill='none' opacity='0.7'/>
</svg>
<div class='a btn3d' style='left:1408px;top:1017px;width:37px;height:21px;font-weight:bold;font-size:11.2px;line-height:19px;text-align:center;letter-spacing:0.6px'>CLS</div>
</div></body></html>
